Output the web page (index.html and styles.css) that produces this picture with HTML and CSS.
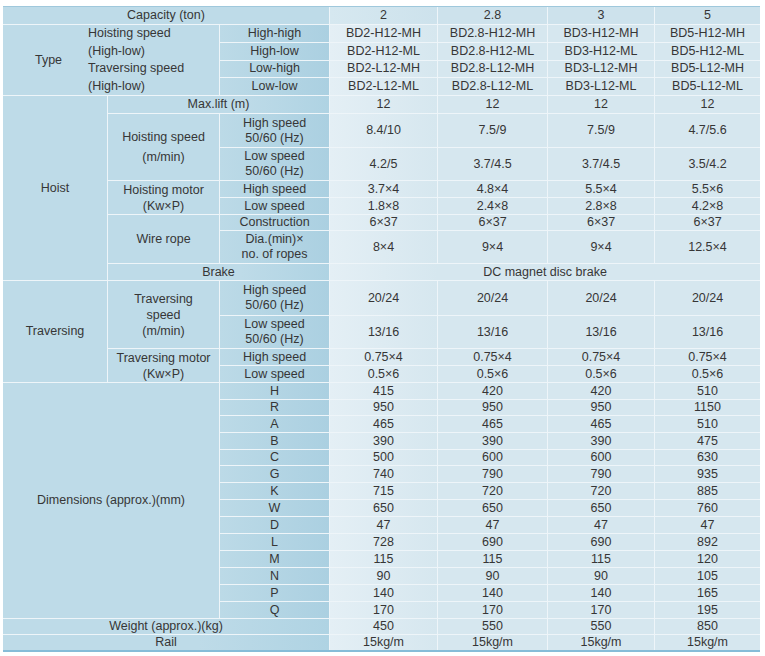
FILE: index.html
```html
<!DOCTYPE html>
<html>
<head>
<meta charset="utf-8">
<link rel="stylesheet" href="styles.css">
</head>
<body>
<table class="spec">
  <colgroup>
    <col class="c1"><col class="c2"><col class="c3">
    <col class="d1"><col class="d2"><col class="d3"><col class="d4">
  </colgroup>
  <tr class="h18">
    <td colspan="3" class="hd">Capacity (ton)</td>
    <td class="cap first">2</td><td class="cap">2.8</td><td class="cap">3</td><td class="cap">5</td>
  </tr>
  <tr class="h17">
    <td colspan="2" rowspan="4" class="hd type">
      <div class="typewrap"><span class="typelabel">Type</span><span class="typetext">Hoisting speed<br>(High-low)<br>Traversing speed<br>(High-low)</span></div>
    </td>
    <td class="sub">High-high</td>
    <td class="first">BD2-H12-MH</td><td>BD2.8-H12-MH</td><td>BD3-H12-MH</td><td>BD5-H12-MH</td>
  </tr>
  <tr class="h17">
    <td class="sub">High-low</td>
    <td class="first">BD2-H12-ML</td><td>BD2.8-H12-ML</td><td>BD3-H12-ML</td><td>BD5-H12-ML</td>
  </tr>
  <tr class="h17">
    <td class="sub">Low-high</td>
    <td class="first">BD2-L12-MH</td><td>BD2.8-L12-MH</td><td>BD3-L12-MH</td><td>BD5-L12-MH</td>
  </tr>
  <tr class="h17">
    <td class="sub">Low-low</td>
    <td class="first">BD2-L12-ML</td><td>BD2.8-L12-ML</td><td>BD3-L12-ML</td><td>BD5-L12-ML</td>
  </tr>
  <tr class="h18">
    <td rowspan="8" class="hd">Hoist</td>
    <td colspan="2" class="hd grad">Max.lift (m)</td>
    <td class="first">12</td><td>12</td><td>12</td><td>12</td>
  </tr>
  <tr class="h34">
    <td rowspan="2" class="hd lh20">Hoisting speed<br>(m/min)</td>
    <td class="sub two">High speed<br>50/60 (Hz)</td>
    <td class="first">8.4/10</td><td>7.5/9</td><td>7.5/9</td><td>4.7/5.6</td>
  </tr>
  <tr class="h33">
    <td class="sub two">Low speed<br>50/60 (Hz)</td>
    <td class="first">4.2/5</td><td>3.7/4.5</td><td>3.7/4.5</td><td>3.5/4.2</td>
  </tr>
  <tr class="h17">
    <td rowspan="2" class="hd lh16">Hoisting motor<br>(Kw×P)</td>
    <td class="sub">High speed</td>
    <td class="first">3.7×4</td><td>4.8×4</td><td>5.5×4</td><td>5.5×6</td>
  </tr>
  <tr class="h17">
    <td class="sub">Low speed</td>
    <td class="first">1.8×8</td><td>2.4×8</td><td>2.8×8</td><td>4.2×8</td>
  </tr>
  <tr class="h16">
    <td rowspan="2" class="hd">Wire rope</td>
    <td class="sub">Construction</td>
    <td class="first">6×37</td><td>6×37</td><td>6×37</td><td>6×37</td>
  </tr>
  <tr class="h33">
    <td class="sub two">Dia.(min)×<br>no. of ropes</td>
    <td class="first">8×4</td><td>9×4</td><td>9×4</td><td>12.5×4</td>
  </tr>
  <tr class="h17">
    <td colspan="2" class="hd grad">Brake</td>
    <td colspan="4" class="brake">DC magnet disc brake</td>
  </tr>
  <tr class="h35">
    <td rowspan="4" class="hd">Traversing</td>
    <td rowspan="2" class="hd lh16">Traversing<br>speed<br>(m/min)</td>
    <td class="sub two">High speed<br>50/60 (Hz)</td>
    <td class="first">20/24</td><td>20/24</td><td>20/24</td><td>20/24</td>
  </tr>
  <tr class="h33">
    <td class="sub two">Low speed<br>50/60 (Hz)</td>
    <td class="first">13/16</td><td>13/16</td><td>13/16</td><td>13/16</td>
  </tr>
  <tr class="h17">
    <td rowspan="2" class="hd lh16">Traversing motor<br>(Kw×P)</td>
    <td class="sub">High speed</td>
    <td class="first">0.75×4</td><td>0.75×4</td><td>0.75×4</td><td>0.75×4</td>
  </tr>
  <tr class="h17">
    <td class="sub">Low speed</td>
    <td class="first">0.5×6</td><td>0.5×6</td><td>0.5×6</td><td>0.5×6</td>
  </tr>
  <tr class="h17">
    <td colspan="2" rowspan="14" class="hd dims">Dimensions (approx.)(mm)</td>
    <td class="sub">H</td>
    <td class="first">415</td><td>420</td><td>420</td><td>510</td>
  </tr>
  <tr class="h16"><td class="sub">R</td><td class="first">950</td><td>950</td><td>950</td><td>1150</td></tr>
  <tr class="h17"><td class="sub">A</td><td class="first">465</td><td>465</td><td>465</td><td>510</td></tr>
  <tr class="h17"><td class="sub">B</td><td class="first">390</td><td>390</td><td>390</td><td>475</td></tr>
  <tr class="h16"><td class="sub">C</td><td class="first">500</td><td>600</td><td>600</td><td>630</td></tr>
  <tr class="h17"><td class="sub">G</td><td class="first">740</td><td>790</td><td>790</td><td>935</td></tr>
  <tr class="h17"><td class="sub">K</td><td class="first">715</td><td>720</td><td>720</td><td>885</td></tr>
  <tr class="h17"><td class="sub">W</td><td class="first">650</td><td>650</td><td>650</td><td>760</td></tr>
  <tr class="h17"><td class="sub">D</td><td class="first">47</td><td>47</td><td>47</td><td>47</td></tr>
  <tr class="h17"><td class="sub">L</td><td class="first">728</td><td>690</td><td>690</td><td>892</td></tr>
  <tr class="h17"><td class="sub">M</td><td class="first">115</td><td>115</td><td>115</td><td>120</td></tr>
  <tr class="h17"><td class="sub">N</td><td class="first">90</td><td>90</td><td>90</td><td>105</td></tr>
  <tr class="h17"><td class="sub">P</td><td class="first">140</td><td>140</td><td>140</td><td>165</td></tr>
  <tr class="h17"><td class="sub">Q</td><td class="first">170</td><td>170</td><td>170</td><td>195</td></tr>
  <tr class="h16">
    <td colspan="3" class="hd grad">Weight (approx.)(kg)</td>
    <td class="first">450</td><td>550</td><td>550</td><td>850</td>
  </tr>
  <tr class="h15 last">
    <td colspan="3" class="hd grad">Rail</td>
    <td class="first">15kg/m</td><td>15kg/m</td><td>15kg/m</td><td>15kg/m</td>
  </tr>
</table>
</body>
</html>
```

FILE: styles.css
```css
html, body {
  margin: 0;
  padding: 0;
  background: #ffffff;
}

.spec {
  margin: 6px 0 0 3px;
  width: 757px;
  table-layout: fixed;
  border-collapse: separate;
  border-spacing: 0;
  border-top: 1px solid #9fc8dc;
  border-bottom: 2px solid #86bcd8;
  font-family: "Liberation Sans", Arial, sans-serif;
  font-size: 12.5px;
  line-height: 15px;
  color: #363636;
}

.c1 { width: 105px; }
.c2 { width: 112px; }
.c3 { width: 110px; }
.d1 { width: 108px; }
.d2 { width: 110px; }
.d3 { width: 107px; }
.d4 { width: 105px; }

.spec td {
  padding: 0;
  text-align: center;
  vertical-align: middle;
  border-right: 1px solid #eef5f9;
  border-bottom: 1px solid #eef5f9;
  background: #d6e7ef;
  overflow: hidden;
  white-space: nowrap;
}

.spec td:last-child { border-right: none; }
.spec tr.last td { border-bottom: none; }

.spec td.first {
  background: linear-gradient(to right, #e4eff5, #d6e7ef);
}

.spec td.cap {
  background: #cde2ec;
}

.spec td.cap.first {
  background: linear-gradient(to right, #d6e8f0, #cde2ec);
}

.spec td.brake {
  background: linear-gradient(to right, #e4eff5, #d6e7ef 25%);
}

.spec td.hd {
  background: #bedbe8;
}

.spec td.grad {
  background: linear-gradient(to right, #bedbe8 60%, #afd3e3);
}

.spec td.sub {
  background: linear-gradient(to right, #bcdae7, #abd0e1);
}

.h15 { height: 15px; }
.h16 { height: 16px; }
.h17 { height: 17px; }
.h18 { height: 18px; }
.h33 { height: 33px; }
.h34 { height: 34px; }
.h35 { height: 35px; }

.lh20 { line-height: 20px; }
.lh16 { line-height: 16px; }

.typewrap {
  display: flex;
  align-items: center;
}

.typelabel {
  box-sizing: border-box;
  width: 85px;
  padding-left: 6px;
  text-align: center;
}

.typetext {
  text-align: left;
  line-height: 17.5px;
}
```
